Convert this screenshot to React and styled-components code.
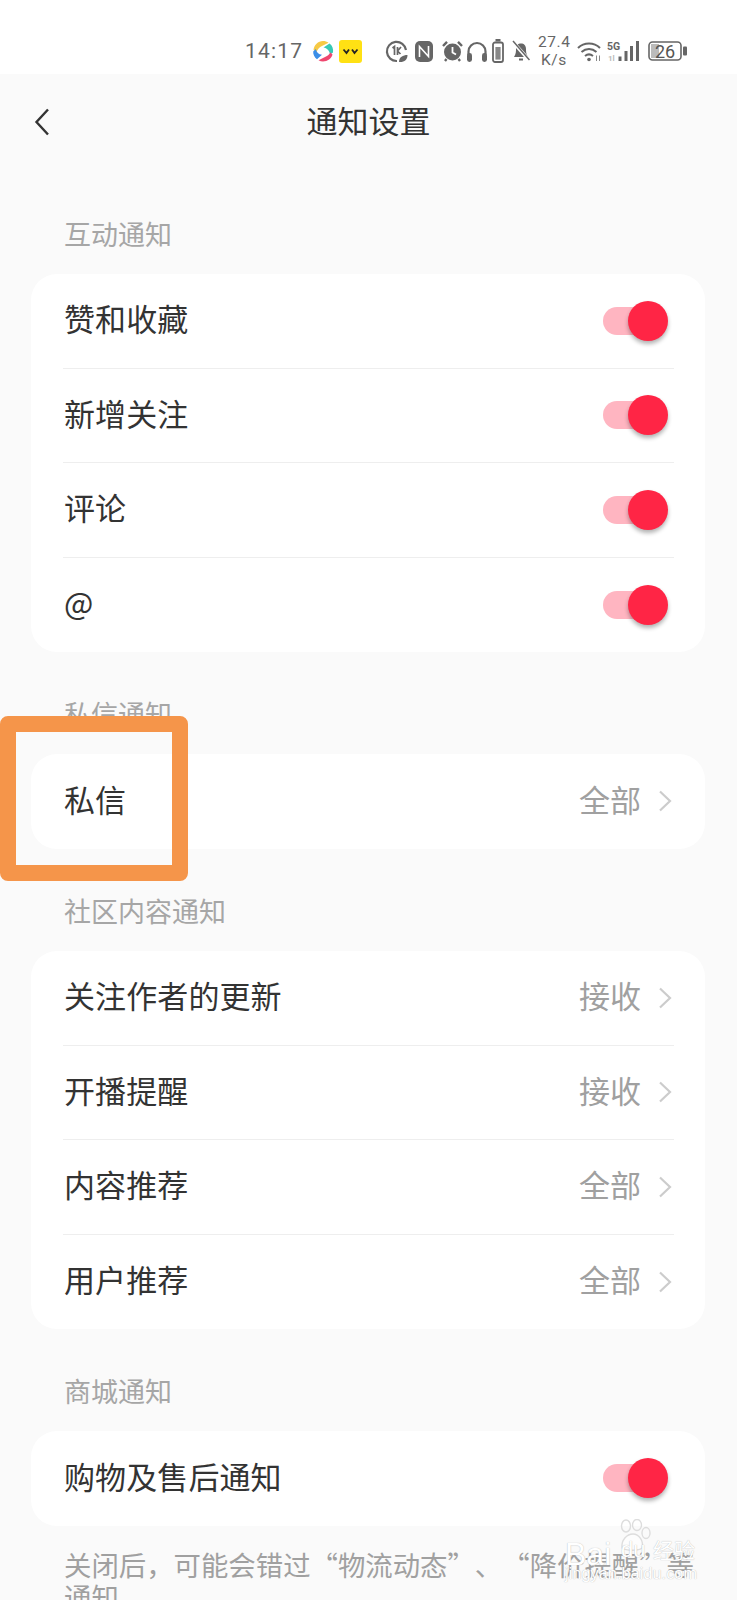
import React from "react";
import styled, { createGlobalStyle } from "styled-components";

const Global = createGlobalStyle`
  html, body { margin: 0; padding: 0; background: #fafafa; }
  #root { width: 737px; height: 1600px; overflow: hidden; }
  * { box-sizing: border-box; }
`;

const Page = styled.div`
  position: relative;
  width: 737px;
  height: 1600px;
  overflow: hidden;
  background: #fafafa;
  font-family: "Noto Sans CJK SC", "Noto Sans", sans-serif;
  color: #333;
`;

const StatusBar = styled.div`
  height: 74px;
  background: #fff;
  display: flex;
  align-items: center;
  padding: 28px 0 0 245px;
  color: #666;
  font-family: Roboto, "Liberation Sans", sans-serif;
`;

const Clock = styled.span`
  font-size: 21px;
  letter-spacing: 1.2px;
  width: 67px;
  line-height: 1;
`;

const StatusIcon = styled.svg`
  display: block;
  flex: none;
  margin-left: ${(p) => p.$ml || 0}px;
`;

const Speed = styled.div`
  width: 32px;
  margin-left: 8px;
  text-align: center;
  font-size: 15.5px;
  line-height: 18px;
  letter-spacing: 0.6px;
  white-space: nowrap;
`;

const NavBar = styled.div`
  height: 96px;
  display: grid;
  grid-template-columns: 1fr auto 1fr;
  align-items: center;
  padding: 0 34px;
`;

const Title = styled.div`
  font-size: 31px;
  line-height: 40px;
  padding-bottom: 4px;
  color: #333;
`;

const Section = styled.section`
  margin: 0;
`;

const SectionLabel = styled.div`
  font-size: 27px;
  line-height: 38px;
  color: #a6a6a6;
  padding-left: 64px;
  margin: ${(p) => (p.$first ? "45px" : "43px")} 0 21px;
`;

const Card = styled.div`
  margin: 0 32px 0 31px;
  min-height: 95px;
  background: #fff;
  border-radius: 26px;
  padding: 0 31px 0 32px;
`;

const Row = styled.div`
  height: 94.5px;
  display: flex;
  align-items: center;
  justify-content: space-between;
  border-bottom: ${(p) => (p.$divided ? "1.5px solid #eeeeee" : "0")};
`;

const RowLabel = styled.span`
  font-size: 31px;
  line-height: 40px;
  padding: 0 0 5px 1px;
  letter-spacing: 0.1px;
  color: #333;
`;

const RowValue = styled.div`
  display: flex;
  align-items: center;
  gap: 17px;
  padding-right: 2px;
  font-size: 31px;
  line-height: 40px;
  color: #a0a0a0;
`;

const ValueText = styled.span`
  padding-bottom: 5px;
`;

const Track = styled.div`
  position: relative;
  width: 57px;
  height: 28px;
  margin-right: 14px;
  border-radius: 14px;
  background: #ffb5c1;
`;

const Knob = styled.div`
  position: absolute;
  top: -6px;
  right: -8px;
  width: 40px;
  height: 40px;
  border-radius: 50%;
  background: #ff2545;
  box-shadow: 0 3px 4px rgba(0, 0, 0, 0.3);
`;

const Footnote = styled.p`
  margin: 22px 0 0;
  padding: 0 32px 0 64px;
  font-size: 27.4px;
  line-height: 32px;
  color: #a0a0a0;
  text-spacing-trim: space-all;
`;

const Annotation = styled.div`
  position: absolute;
  left: 0;
  top: 716px;
  width: 188px;
  height: 165px;
  border: 16px solid #f5954a;
  border-radius: 8px;
`;

const Watermark = styled.div`
  position: absolute;
  left: 565px;
  top: 1518px;
  width: 140px;
  height: 68px;
  color: #fff;
  font-family: "Liberation Sans", sans-serif;
  text-shadow: 0 0 1px #aaa;
`;

const MarkBai = styled.span`
  position: absolute;
  left: 0;
  top: 18px;
  font-size: 32px;
  line-height: 36px;
`;

const MarkDu = styled.span`
  position: absolute;
  left: 56px;
  top: 19px;
  font-size: 22px;
  line-height: 26px;
`;

const MarkCn = styled.span`
  position: absolute;
  left: 88px;
  top: 18px;
  font-size: 21px;
  line-height: 26px;
  font-family: "Noto Sans CJK SC", sans-serif;
`;

const MarkUrl = styled.span`
  position: absolute;
  left: 0;
  top: 47px;
  font-size: 16.4px;
  line-height: 16px;
`;

const MarkPaw = styled.svg`
  position: absolute;
  left: 52px;
  top: 1px;
`;

const Chevron = () => (
  <svg width="14" height="22" viewBox="0 0 14 22" fill="none">
    <path d="M2 1.5 12 11 2 20.5" stroke="#cccccc" strokeWidth="2.2" />
  </svg>
);

const Back = () => (
  <svg width="16" height="28" viewBox="0 0 16 28" fill="none">
    <path d="M14 1.5 2.5 14 14 26.5" stroke="#333" strokeWidth="2.4" />
  </svg>
);

const Toggle = () => (
  <Track>
    <Knob />
  </Track>
);

const SwitchRow = ({ label, divided }) => (
  <Row $divided={divided}>
    <RowLabel>{label}</RowLabel>
    <Toggle />
  </Row>
);

const LinkRow = ({ label, value, divided }) => (
  <Row $divided={divided}>
    <RowLabel>{label}</RowLabel>
    <RowValue>
      <ValueText>{value}</ValueText>
      <Chevron />
    </RowValue>
  </Row>
);

const AppLogo = () => (
  <StatusIcon width="22" height="24" viewBox="0 0 22 24">
    <path d="M1.5 11C2 6 6 2 11 2C13 2 15 2.5 16.5 3.8L9 7.5C7 8.7 5.5 10 4.5 13.5Z" fill="#f6c945" />
    <path d="M17.5 4.5C20.5 6.5 21.5 10 21 13.5L18 15.5C17.5 11.5 15 9 11.5 8.5Z" fill="#37c9b5" />
    <path d="M20.5 15.5C19.5 19.5 15.5 22.5 11 22.5C9.5 22.5 8 22 6.5 21.2L14 17.5C16 16.5 17.5 15 18.5 13.5Z" fill="#ef476f" />
    <path d="M5 20.2C2.5 18.5 1 15.5 1.2 12.5L3.8 10C4.5 13.5 6.5 15.3 10 15.8Z" fill="#3b8ee8" />
  </StatusIcon>
);

const YYLogo = () => (
  <StatusIcon $ml={5} width="23" height="23" viewBox="0 0 23 23">
    <rect width="23" height="23" rx="3" fill="#ffe114" />
    <path d="M4.5 9.5 7.5 13 10 9.5M13 9.5 15.5 13 18.5 9.5" stroke="#222" strokeWidth="1.8" fill="none" />
  </StatusIcon>
);

const LeafOne = () => (
  <StatusIcon $ml={23} width="23" height="23" viewBox="0 0 23 23" fill="none" stroke="#666">
    <path d="M12 21A9.6 9.6 0 1 1 21 10" strokeWidth="2.2" />
    <path d="M7.5 8 9.5 6.5V15M12.5 7V15M12.5 11 16 7M12.5 11 15.5 14" strokeWidth="1.7" />
    <path d="M14 22C14 17 18 15 22.5 15C22.5 20 19 22.5 14 22Z" fill="#666" stroke="none" />
  </StatusIcon>
);

const NfcIcon = () => (
  <StatusIcon $ml={7} width="18" height="21" viewBox="0 0 18 21">
    <rect width="18" height="21" rx="5" fill="#666" />
    <path d="M4.5 16V5.5L9 10.5M13.5 5V15.5L9 10.5" stroke="#fff" strokeWidth="1.6" fill="none" />
  </StatusIcon>
);

const AlarmIcon = () => (
  <StatusIcon $ml={9} width="21" height="22" viewBox="0 0 21 22">
    <circle cx="10.5" cy="12" r="8.5" fill="#666" />
    <path d="M1 6 5 1.8M20 6 16 1.8M4.5 19 3 21M16.5 19 18 21" stroke="#666" strokeWidth="2.4" fill="none" />
    <path d="M10.5 7V12.5L14 14.5" stroke="#fff" strokeWidth="1.8" fill="none" />
  </StatusIcon>
);

const Headphones = () => (
  <StatusIcon $ml={4} width="20" height="21" viewBox="0 0 20 21" fill="none">
    <path d="M1.5 14V10.5a8.5 8.5 0 0 1 17 0V14" stroke="#666" strokeWidth="2.2" />
    <rect x="0" y="12" width="5" height="9" rx="2.4" fill="#666" />
    <rect x="15" y="12" width="5" height="9" rx="2.4" fill="#666" />
  </StatusIcon>
);

const BatteryOutline = () => (
  <StatusIcon $ml={5} width="12" height="24" viewBox="0 0 12 24" fill="none">
    <rect x="3.5" y="0" width="5" height="2.5" fill="#666" />
    <rect x="1" y="3.5" width="10" height="19.5" rx="2" stroke="#666" strokeWidth="1.8" />
    <rect x="3.4" y="8" width="5.2" height="12.6" fill="#888" />
  </StatusIcon>
);

const BellOff = () => (
  <StatusIcon $ml={8} width="18" height="22" viewBox="0 0 18 22">
    <path d="M2 17C4 14 4 11 4 9C4 5.5 6 3.5 9 3.5C12 3.5 14 5.5 14 9C14 11 14 14 16 17Z" fill="#666" />
    <path d="M7 19.5H11" stroke="#666" strokeWidth="2" />
    <path d="M1 2 17 20" stroke="#fff" strokeWidth="3.4" />
    <path d="M1 1 17.5 20" stroke="#666" strokeWidth="1.5" />
  </StatusIcon>
);

const Wifi = () => (
  <StatusIcon $ml={7} width="25" height="21" viewBox="0 0 25 21" fill="none" stroke="#666" strokeWidth="2">
    <path d="M1 7C7 1 17 1 23 7" />
    <path d="M4.5 11C9 7 15 7 19.5 11" />
    <path d="M8 15C10.5 13 13.5 13 16 15" />
    <circle cx="12" cy="18.5" r="1.8" fill="#666" stroke="none" />
    <path d="M19.5 14.5V20M22.5 14.5V20" strokeWidth="1" stroke="#888" />
  </StatusIcon>
);

const Signal = () => (
  <StatusIcon $ml={5} width="33" height="22" viewBox="0 0 33 22">
    <text x="0" y="10" fontSize="10.5" fontWeight="700" fill="#666" fontFamily="Roboto, sans-serif">5G</text>
    <text x="1" y="21" fontSize="8" fontWeight="700" fill="#bbb" fontFamily="Roboto, sans-serif">1l</text>
    <rect x="11.5" y="16.5" width="3" height="4.5" fill="#666" />
    <rect x="17.5" y="11" width="3" height="10" fill="#666" />
    <rect x="23" y="6" width="3" height="15" fill="#666" />
    <rect x="29" y="1" width="3" height="20" fill="#666" />
  </StatusIcon>
);

const Battery = () => (
  <StatusIcon $ml={8} width="39" height="20" viewBox="0 0 39 20" fill="none">
    <rect x="1" y="1" width="32" height="18" rx="3.5" stroke="#666" strokeWidth="1.6" />
    <rect x="3" y="3" width="8" height="14" fill="#bbb" />
    <text x="17" y="16.5" textAnchor="middle" fontSize="18" fill="#555" fontFamily="Roboto, sans-serif">26</text>
    <rect x="35" y="5.5" width="4" height="9" rx="1" fill="#666" />
  </StatusIcon>
);

export default function App() {
  return (
    <Page>
      <Global />
      <StatusBar>
        <Clock>14:17</Clock>
        <AppLogo />
        <YYLogo />
        <LeafOne />
        <NfcIcon />
        <AlarmIcon />
        <Headphones />
        <BatteryOutline />
        <BellOff />
        <Speed>
          27.4
          <br />
          K/s
        </Speed>
        <Wifi />
        <Signal />
        <Battery />
      </StatusBar>

      <NavBar>
        <Back />
        <Title>通知设置</Title>
      </NavBar>

      <Section>
        <SectionLabel $first>互动通知</SectionLabel>
        <Card>
          <SwitchRow label="赞和收藏" divided />
          <SwitchRow label="新增关注" divided />
          <SwitchRow label="评论" divided />
          <SwitchRow label="@" />
        </Card>
      </Section>

      <Section>
        <SectionLabel>私信通知</SectionLabel>
        <Card>
          <LinkRow label="私信" value="全部" />
        </Card>
      </Section>

      <Section>
        <SectionLabel>社区内容通知</SectionLabel>
        <Card>
          <LinkRow label="关注作者的更新" value="接收" divided />
          <LinkRow label="开播提醒" value="接收" divided />
          <LinkRow label="内容推荐" value="全部" divided />
          <LinkRow label="用户推荐" value="全部" />
        </Card>
      </Section>

      <Section>
        <SectionLabel>商城通知</SectionLabel>
        <Card>
          <SwitchRow label="购物及售后通知" />
        </Card>
        <Footnote>关闭后，可能会错过“物流动态”、“降价提醒”等通知</Footnote>
      </Section>

      <Annotation />

      <Watermark>
        <MarkPaw width="34" height="32" viewBox="0 0 34 32" fill="none" stroke="#ddd" strokeWidth="1.4">
          <ellipse cx="9" cy="7" rx="4.5" ry="6" />
          <ellipse cx="20" cy="6" rx="4.5" ry="5.5" />
          <ellipse cx="29" cy="14" rx="4" ry="5.5" />
          <path d="M5 29C4 21 10 15 16 15C22 15 27 22 25 29C22 32 9 32 5 29Z" fill="#fff" fillOpacity="0.6" />
        </MarkPaw>
        <MarkBai>Bai</MarkBai>
        <MarkDu>du</MarkDu>
        <MarkCn>经验</MarkCn>
        <MarkUrl>jingyan.baidu.com</MarkUrl>
      </Watermark>
    </Page>
  );
}
